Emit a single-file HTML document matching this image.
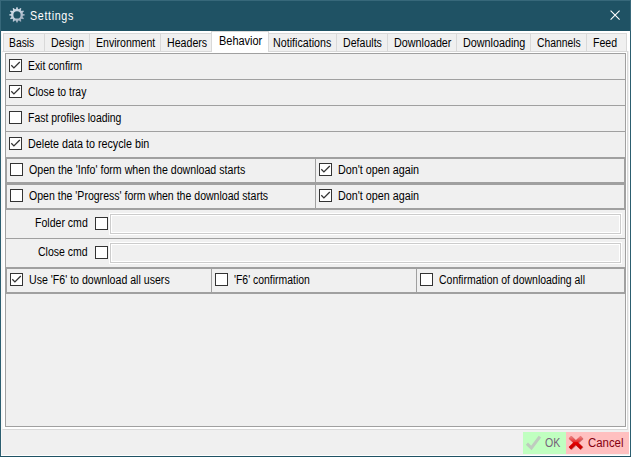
<!DOCTYPE html>
<html><head><meta charset="utf-8"><style>
html,body{margin:0;padding:0;}
body{width:631px;height:457px;position:relative;overflow:hidden;background:#f0f0f0;font-family:"Liberation Sans",sans-serif;}
div{position:absolute;}
.t{position:absolute;white-space:pre;line-height:normal;transform-origin:0 0;display:block;font-family:"Liberation Sans",sans-serif;}
</style></head><body>
<div style="left:0px;top:0px;width:631px;height:31px;background:#1f5264"></div>
<div style="left:0px;top:0px;width:631px;height:1px;background:#37687a"></div>
<div style="left:0px;top:0px;width:1px;height:31px;background:#37687a"></div>
<div style="left:630px;top:0px;width:1px;height:31px;background:#37687a"></div>
<div style="left:0px;top:31px;width:1px;height:426px;background:#2c5e70"></div>
<div style="left:630px;top:31px;width:1px;height:426px;background:#2c5e70"></div>
<div style="left:0px;top:456px;width:631px;height:1px;background:#1f5264"></div>
<div style="left:1px;top:31px;width:629px;height:1px;background:#fff"></div>
<div style="left:1px;top:31px;width:1px;height:425px;background:#f8f7f6"></div>
<div style="left:629px;top:31px;width:1px;height:425px;background:#fff"></div>
<div style="left:1px;top:455px;width:629px;height:1px;background:#fff"></div>
<div style="left:2px;top:32px;width:627px;height:19px;background:#fff"></div>
<svg style="position:absolute;left:0;top:0" width="40" height="31" viewBox="0 0 40 31">
<defs><linearGradient id="gg" x1="0" y1="0" x2="1" y2="1"><stop offset="0" stop-color="#dde6ef"/><stop offset="0.55" stop-color="#bccad8"/><stop offset="1" stop-color="#8898a8"/></linearGradient></defs>
<g transform="translate(17,14.9)"><path d="M-0.97 -5.92 L-0.64 -7.67 L0.64 -7.67 L0.97 -5.92 L2.12 -5.61 L3.28 -6.97 L4.39 -6.32 L3.80 -4.64 L4.64 -3.80 L6.32 -4.39 L6.97 -3.28 L5.61 -2.12 L5.92 -0.97 L7.67 -0.64 L7.67 0.64 L5.92 0.97 L5.61 2.12 L6.97 3.28 L6.32 4.39 L4.64 3.80 L3.80 4.64 L4.39 6.32 L3.28 6.97 L2.12 5.61 L0.97 5.92 L0.64 7.67 L-0.64 7.67 L-0.97 5.92 L-2.12 5.61 L-3.28 6.97 L-4.39 6.32 L-3.80 4.64 L-4.64 3.80 L-6.32 4.39 L-6.97 3.28 L-5.61 2.12 L-5.92 0.97 L-7.67 0.64 L-7.67 -0.64 L-5.92 -0.97 L-5.61 -2.12 L-6.97 -3.28 L-6.32 -4.39 L-4.64 -3.80 L-3.80 -4.64 L-4.39 -6.32 L-3.28 -6.97 L-2.12 -5.61 Z M3.6 0 A3.6 3.6 0 1 0 -3.6 0 A3.6 3.6 0 1 0 3.6 0 Z" fill="url(#gg)" fill-rule="evenodd"/></g></svg>
<span class="t" style="left:29.6px;top:9px;font-size:12.5px;letter-spacing:0.75px;transform:scaleX(0.86);color:#fff">Settings</span>
<svg style="position:absolute;left:605px;top:5px" width="20" height="20" viewBox="0 0 20 20"><path d="M5.6 5.6 L14.6 14.6 M14.6 5.6 L5.6 14.6" stroke="#fff" stroke-width="1.1" fill="none"/></svg>
<div style="left:2px;top:51px;width:626px;height:379px;background:#fff;box-sizing:border-box;border:1px solid #d9d9d9;border-left-color:#f6f6f6"></div>
<div style="left:3px;top:33px;width:42px;height:19px;background:#f0f0f0;box-sizing:border-box;border:1px solid #d9d9d9"></div>
<span class="t" style="left:9.14px;top:36px;font-size:12px;transform:scaleX(0.861);color:#000;">Basis</span>
<div style="left:44px;top:33px;width:46px;height:19px;background:#f0f0f0;box-sizing:border-box;border:1px solid #d9d9d9"></div>
<span class="t" style="left:51.11px;top:36px;font-size:12px;transform:scaleX(0.889);color:#000;">Design</span>
<div style="left:89px;top:33px;width:72px;height:19px;background:#f0f0f0;box-sizing:border-box;border:1px solid #d9d9d9"></div>
<span class="t" style="left:96.12px;top:36px;font-size:12px;transform:scaleX(0.879);color:#000;">Environment</span>
<div style="left:160px;top:33px;width:52px;height:19px;background:#f0f0f0;box-sizing:border-box;border:1px solid #d9d9d9"></div>
<span class="t" style="left:167.11px;top:36px;font-size:12px;transform:scaleX(0.886);color:#000;">Headers</span>
<div style="left:211px;top:31px;width:58px;height:21px;background:#fff;box-sizing:border-box;border:1px solid #d9d9d9;border-bottom:0"></div>
<span class="t" style="left:219.09px;top:34px;font-size:12px;transform:scaleX(0.913);color:#000;">Behavior</span>
<div style="left:268px;top:33px;width:69px;height:19px;background:#f0f0f0;box-sizing:border-box;border:1px solid #d9d9d9"></div>
<span class="t" style="left:273.11px;top:36px;font-size:12px;transform:scaleX(0.892);color:#000;">Notifications</span>
<div style="left:336px;top:33px;width:52px;height:19px;background:#f0f0f0;box-sizing:border-box;border:1px solid #d9d9d9"></div>
<span class="t" style="left:343.12px;top:36px;font-size:12px;transform:scaleX(0.884);color:#000;">Defaults</span>
<div style="left:387px;top:33px;width:70px;height:19px;background:#f0f0f0;box-sizing:border-box;border:1px solid #d9d9d9"></div>
<span class="t" style="left:394.10px;top:36px;font-size:12px;transform:scaleX(0.897);color:#000;">Downloader</span>
<div style="left:456px;top:33px;width:75px;height:19px;background:#f0f0f0;box-sizing:border-box;border:1px solid #d9d9d9"></div>
<span class="t" style="left:463.10px;top:36px;font-size:12px;transform:scaleX(0.899);color:#000;">Downloading</span>
<div style="left:530px;top:33px;width:57px;height:19px;background:#f0f0f0;box-sizing:border-box;border:1px solid #d9d9d9"></div>
<span class="t" style="left:537.00px;top:36px;font-size:12px;transform:scaleX(0.861);color:#000;">Channels</span>
<div style="left:586px;top:33px;width:41px;height:19px;background:#f0f0f0;box-sizing:border-box;border:1px solid #d9d9d9"></div>
<span class="t" style="left:593.12px;top:36px;font-size:12px;transform:scaleX(0.881);color:#000;">Feed</span>
<div style="left:5px;top:53px;width:621px;height:374px;background:#f0f0f0;box-sizing:border-box;border:1px solid #a0a0a0"></div>
<div style="left:5px;top:79px;width:621px;height:1px;background:#a0a0a0"></div>
<div style="left:5px;top:105px;width:621px;height:1px;background:#a0a0a0"></div>
<div style="left:5px;top:131px;width:621px;height:1px;background:#a0a0a0"></div>
<div style="left:5px;top:157px;width:621px;height:1px;background:#a0a0a0"></div>
<div style="left:5px;top:183px;width:621px;height:1px;background:#a0a0a0"></div>
<div style="left:5px;top:209px;width:621px;height:1px;background:#a0a0a0"></div>
<div style="left:5px;top:238px;width:621px;height:1px;background:#a0a0a0"></div>
<div style="left:5px;top:267px;width:621px;height:1px;background:#a0a0a0"></div>
<div style="left:5px;top:293px;width:621px;height:1px;background:#a0a0a0"></div>
<div style="left:6px;top:158px;width:619px;height:25px;box-sizing:border-box;border:1px solid #a0a0a0"></div>
<div style="left:315px;top:158px;width:1px;height:25px;background:#a0a0a0"></div>
<div style="left:6px;top:184px;width:619px;height:25px;box-sizing:border-box;border:1px solid #a0a0a0"></div>
<div style="left:315px;top:184px;width:1px;height:25px;background:#a0a0a0"></div>
<div style="left:6px;top:268px;width:619px;height:25px;box-sizing:border-box;border:1px solid #a0a0a0"></div>
<div style="left:211px;top:268px;width:1px;height:25px;background:#a0a0a0"></div>
<div style="left:416px;top:268px;width:1px;height:25px;background:#a0a0a0"></div>
<svg style="position:absolute;left:9px;top:59px" width="13" height="13" viewBox="0 0 13 13"><rect x="0.5" y="0.5" width="12" height="12" fill="#fff" stroke="#333"/><path d="M2.3 6.3 L4.9 8.9 L10.8 3" stroke="#333" stroke-width="1.3" fill="none"/></svg>
<span class="t" style="left:28.14px;top:59px;font-size:12px;transform:scaleX(0.864);color:#000;">Exit confirm</span>
<svg style="position:absolute;left:9px;top:85px" width="13" height="13" viewBox="0 0 13 13"><rect x="0.5" y="0.5" width="12" height="12" fill="#fff" stroke="#333"/><path d="M2.3 6.3 L4.9 8.9 L10.8 3" stroke="#333" stroke-width="1.3" fill="none"/></svg>
<span class="t" style="left:28.00px;top:85px;font-size:12px;transform:scaleX(0.866);color:#000;">Close to tray</span>
<svg style="position:absolute;left:9px;top:111px" width="13" height="13" viewBox="0 0 13 13"><rect x="0.5" y="0.5" width="12" height="12" fill="#fff" stroke="#333"/></svg>
<span class="t" style="left:28.13px;top:111px;font-size:12px;transform:scaleX(0.870);color:#000;">Fast profiles loading</span>
<svg style="position:absolute;left:9px;top:137px" width="13" height="13" viewBox="0 0 13 13"><rect x="0.5" y="0.5" width="12" height="12" fill="#fff" stroke="#333"/><path d="M2.3 6.3 L4.9 8.9 L10.8 3" stroke="#333" stroke-width="1.3" fill="none"/></svg>
<span class="t" style="left:28.10px;top:137px;font-size:12px;transform:scaleX(0.896);color:#000;">Delete data to recycle bin</span>
<svg style="position:absolute;left:10px;top:163px" width="13" height="13" viewBox="0 0 13 13"><rect x="0.5" y="0.5" width="12" height="12" fill="#fff" stroke="#333"/></svg>
<span class="t" style="left:29.00px;top:163px;font-size:12px;transform:scaleX(0.886);color:#000;">Open the 'Info' form when the download starts</span>
<svg style="position:absolute;left:319px;top:163px" width="13" height="13" viewBox="0 0 13 13"><rect x="0.5" y="0.5" width="12" height="12" fill="#fff" stroke="#333"/><path d="M2.3 6.3 L4.9 8.9 L10.8 3" stroke="#333" stroke-width="1.3" fill="none"/></svg>
<span class="t" style="left:338.10px;top:163px;font-size:12px;transform:scaleX(0.897);color:#000;">Don't open again</span>
<svg style="position:absolute;left:10px;top:189px" width="13" height="13" viewBox="0 0 13 13"><rect x="0.5" y="0.5" width="12" height="12" fill="#fff" stroke="#333"/></svg>
<span class="t" style="left:29.00px;top:189px;font-size:12px;transform:scaleX(0.879);color:#000;">Open the 'Progress' form when the download starts</span>
<svg style="position:absolute;left:319px;top:189px" width="13" height="13" viewBox="0 0 13 13"><rect x="0.5" y="0.5" width="12" height="12" fill="#fff" stroke="#333"/><path d="M2.3 6.3 L4.9 8.9 L10.8 3" stroke="#333" stroke-width="1.3" fill="none"/></svg>
<span class="t" style="left:338.10px;top:189px;font-size:12px;transform:scaleX(0.897);color:#000;">Don't open again</span>
<span class="t" style="left:35.12px;top:216px;font-size:12px;transform:scaleX(0.879);color:#000;">Folder cmd</span>
<svg style="position:absolute;left:95px;top:217px" width="13" height="13" viewBox="0 0 13 13"><rect x="0.5" y="0.5" width="12" height="12" fill="#fff" stroke="#333"/></svg>
<div style="left:110px;top:214px;width:511px;height:20px;background:#f0f0f0;box-sizing:border-box;border:1px solid #cccccc;box-shadow:inset 0 0 0 1px #fff,0 0 0 1px #fff"></div>
<span class="t" style="left:38.00px;top:245px;font-size:12px;transform:scaleX(0.877);color:#000;">Close cmd</span>
<svg style="position:absolute;left:95px;top:246px" width="13" height="13" viewBox="0 0 13 13"><rect x="0.5" y="0.5" width="12" height="12" fill="#fff" stroke="#333"/></svg>
<div style="left:110px;top:243px;width:511px;height:20px;background:#f0f0f0;box-sizing:border-box;border:1px solid #cccccc;box-shadow:inset 0 0 0 1px #fff,0 0 0 1px #fff"></div>
<svg style="position:absolute;left:10px;top:273px" width="13" height="13" viewBox="0 0 13 13"><rect x="0.5" y="0.5" width="12" height="12" fill="#fff" stroke="#333"/><path d="M2.3 6.3 L4.9 8.9 L10.8 3" stroke="#333" stroke-width="1.3" fill="none"/></svg>
<span class="t" style="left:29.12px;top:273px;font-size:12px;transform:scaleX(0.883);color:#000;">Use 'F6' to download all users</span>
<svg style="position:absolute;left:215px;top:273px" width="13" height="13" viewBox="0 0 13 13"><rect x="0.5" y="0.5" width="12" height="12" fill="#fff" stroke="#333"/></svg>
<span class="t" style="left:234.00px;top:273px;font-size:12px;transform:scaleX(0.869);color:#000;">'F6' confirmation</span>
<svg style="position:absolute;left:420px;top:273px" width="13" height="13" viewBox="0 0 13 13"><rect x="0.5" y="0.5" width="12" height="12" fill="#fff" stroke="#333"/></svg>
<span class="t" style="left:439.00px;top:273px;font-size:12px;transform:scaleX(0.872);color:#000;">Confirmation of downloading all</span>
<div style="left:523px;top:432px;width:43px;height:22px;background:#c0ffc0"></div>
<div style="left:566px;top:432px;width:63px;height:22px;background:#ffc0c0"></div>
<svg style="position:absolute;left:522px;top:432px" width="22" height="22" viewBox="0 0 22 22"><path d="M4.9 11.6 L9.4 16.0 L17.9 4.6" stroke="#bfcbbf" stroke-width="3.1" fill="none" stroke-linecap="butt" stroke-linejoin="miter"/></svg>
<span class="t" style="left:545.00px;top:436px;font-size:12px;transform:scaleX(0.880);color:#76607a;">OK</span>
<svg style="position:absolute;left:565px;top:432px" width="22" height="22" viewBox="0 0 22 22"><defs><linearGradient id="xg" x1="0" y1="0" x2="0" y2="1"><stop offset="0" stop-color="#ec7a7a"/><stop offset="0.42" stop-color="#e83030"/><stop offset="0.5" stop-color="#e40000"/><stop offset="1" stop-color="#c80000"/></linearGradient></defs><path d="M4.8 5.0 L16.6 16.2 M16.6 5.0 L4.8 16.2" stroke="#901010" stroke-opacity="0.5" stroke-width="3.9" fill="none" transform="translate(0.5,0.5)"/><path d="M4.8 5.0 L16.6 16.2 M16.6 5.0 L4.8 16.2" stroke="url(#xg)" stroke-width="3.4" fill="none"/></svg>
<span class="t" style="left:587.50px;top:436px;font-size:12px;transform:scaleX(0.950);color:#850010;">Cancel</span>
</body></html>
